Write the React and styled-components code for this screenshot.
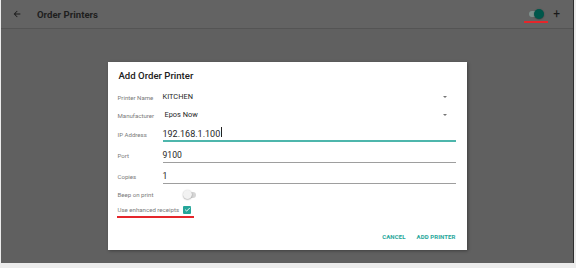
import React from "react";
import styled, { createGlobalStyle } from "styled-components";

const Global = createGlobalStyle`
  html, body {
    margin: 0;
    background: #ececec;
    font-family: Roboto, "Liberation Sans", sans-serif;
  }
`;

const Frame = styled.div`
  width: 572px;
  height: 263px;
  margin-left: 1px;
  background: #606060;
  border-right: 1px solid #2e2e2e;
  display: flex;
  flex-direction: column;
`;

const TopBar = styled.div`
  height: 28px;
  border-bottom: 1px solid #545454;
  display: flex;
  align-items: center;
  padding: 0 0 0 11px;
  background: #636363;
`;

const Title = styled.div`
  font-size: 9.6px;
  font-weight: 700;
  color: #1e1e1e;
  margin-left: 15px;
  flex: 1;
`;

const Marked = styled.div`
  position: relative;
  display: flex;
  align-items: center;
  &::after {
    content: "";
    position: absolute;
    z-index: 2;
    left: ${(p) => p.$left || 0}px;
    right: ${(p) => p.$right || 0}px;
    bottom: ${(p) => p.$bottom || -4}px;
    height: 2px;
    background: #e5262b;
  }
`;

const Body = styled.div`
  flex: 1;
  display: flex;
  justify-content: center;
  padding-top: 33px;
`;

const Dialog = styled.div`
  width: 359px;
  height: 188px;
  background: #fff;
  box-shadow: 1px 1px 3px rgba(0, 0, 0, 0.35);
  box-sizing: border-box;
  padding: 6px 11px 0 10px;
  display: flex;
  flex-direction: column;
`;

const DialogTitle = styled.div`
  font-size: 9.6px;
  font-weight: 500;
  color: #212121;
  height: 16px;
  line-height: 16px;
  margin-bottom: 4px;
  padding-left: 1px;
`;

const Row = styled.div`
  display: flex;
  align-items: ${(p) => (p.$bottom ? "flex-end" : "center")};
  height: ${(p) => p.$h || 18}px;
  flex: none;
`;

const Label = styled.div`
  width: 45px;
  font-size: 6.1px;
  line-height: 7px;
  color: #7a7a7a;
  white-space: nowrap;
  flex: none;
  margin-bottom: ${(p) => p.$mb || 0}px;
`;

const Field = styled.div`
  flex: 1;
  align-self: stretch;
  display: flex;
  align-items: ${(p) => (p.$line ? "flex-end" : "center")};
  box-sizing: border-box;
  padding-left: ${(p) => p.$pad || 0}px;
  padding-bottom: ${(p) => (p.$line ? p.$below : 0)}px;
  border-bottom: ${(p) =>
    p.$line === "active"
      ? "2px solid #4db6ac"
      : p.$line
      ? "1px solid #9e9e9e"
      : "none"};
  font-size: ${(p) => p.$size || 7.4}px;
  line-height: ${(p) => (p.$size || 7.4) + 1.5}px;
  color: #262626;
`;

const Caret = styled.span`
  width: 1px;
  height: 10px;
  background: #222;
  margin-left: 0.5px;
  align-self: center;
`;

const Arrow = styled.div`
  margin-left: auto;
  margin-right: 9px;
  width: 0;
  height: 0;
  border-left: 2.5px solid transparent;
  border-right: 2.5px solid transparent;
  border-top: 2.5px solid #757575;
`;

const Toggle = styled.div`
  position: relative;
  width: ${(p) => (p.$on ? 14 : 12)}px;
  height: 6px;
  border-radius: 3px;
  background: ${(p) => (p.$on ? "#7d8f8b" : "#d6d6d6")};
  margin-left: ${(p) => p.$ml || 0}px;
  &::after {
    content: "";
    position: absolute;
    top: -2px;
    ${(p) => (p.$on ? "right: -1px;" : "left: -1px;")}
    width: ${(p) => (p.$on ? 10 : 9)}px;
    height: ${(p) => (p.$on ? 10 : 9)}px;
    margin-top: ${(p) => (p.$on ? 0 : 0.5)}px;
    border-radius: 50%;
    background: ${(p) => (p.$on ? "#00574b" : "#f2f2f2")};
    box-shadow: 0 0.5px 1.5px rgba(0, 0, 0, 0.4);
  }
`;

const Check = styled.div`
  width: 8px;
  height: 8px;
  background: #26a69a;
  border-radius: 1px;
  display: flex;
  align-items: center;
  justify-content: center;
  margin-left: 4px;
`;

const Actions = styled.div`
  margin-top: auto;
  display: flex;
  justify-content: flex-end;
  gap: 11px;
  height: 26px;
  padding-bottom: 2px;
  box-sizing: border-box;
  align-items: center;
`;

const Action = styled.div`
  font-size: 6px;
  font-weight: 700;
  color: #26a69a;
  letter-spacing: 0.1px;
`;

const Plus = styled.div`
  font-size: 12px;
  color: #1a1a1a;
  margin: 0 13px 0 10px;
  line-height: 1;
`;

export default function App() {
  return (
    <>
      <Global />
      <Frame>
        <TopBar>
          <svg width="10" height="10" viewBox="0 0 24 24">
            <path d="M20 11H7.83l5.59-5.59L12 4l-8 8 8 8 1.41-1.41L7.83 13H20v-2z" fill="#1a1a1a" />
          </svg>
          <Title>Order Printers</Title>
          <Marked $left={-5} $right={-5} $bottom={-6}>
            <Toggle $on />
          </Marked>
          <Plus>+</Plus>
        </TopBar>
        <Body>
          <Dialog>
            <DialogTitle>Add Order Printer</DialogTitle>
            <Row>
              <Label>Printer Name</Label>
              <Field>
                KITCHEN
                <Arrow />
              </Field>
            </Row>
            <Row>
              <Label>Manufacturer</Label>
              <Field $pad={2}>
                Epos Now
                <Arrow />
              </Field>
            </Row>
            <Row $h={18} $bottom>
              <Label $mb={4.5}>IP Address</Label>
              <Field $line="active" $size={9} $below={1}>
                192.168.1.100
                <Caret />
              </Field>
            </Row>
            <Row $h={21} $bottom>
              <Label $mb={4.5}>Port</Label>
              <Field $line $size={8.6} $below={2}>9100</Field>
            </Row>
            <Row $h={21} $bottom>
              <Label $mb={4.5}>Copies</Label>
              <Field $line $size={8.6} $below={2}>1</Field>
            </Row>
            <Row $h={21}>
              <Label>Beep on print</Label>
              <Toggle $ml={21} />
            </Row>
            <Row $h={9}>
              <Marked $left={-1} $right={-3} $bottom={-4}>
                <Label as="span" style={{ width: "auto" }}>
                  Use enhanced receipts
                </Label>
                <Check>
                  <svg width="7" height="7" viewBox="0 0 24 24">
                    <path d="M4 12.5l5 5L20 6.5" fill="none" stroke="#fff" strokeWidth="3.2" />
                  </svg>
                </Check>
              </Marked>
            </Row>
            <Actions>
              <Action>CANCEL</Action>
              <Action>ADD PRINTER</Action>
            </Actions>
          </Dialog>
        </Body>
      </Frame>
    </>
  );
}
